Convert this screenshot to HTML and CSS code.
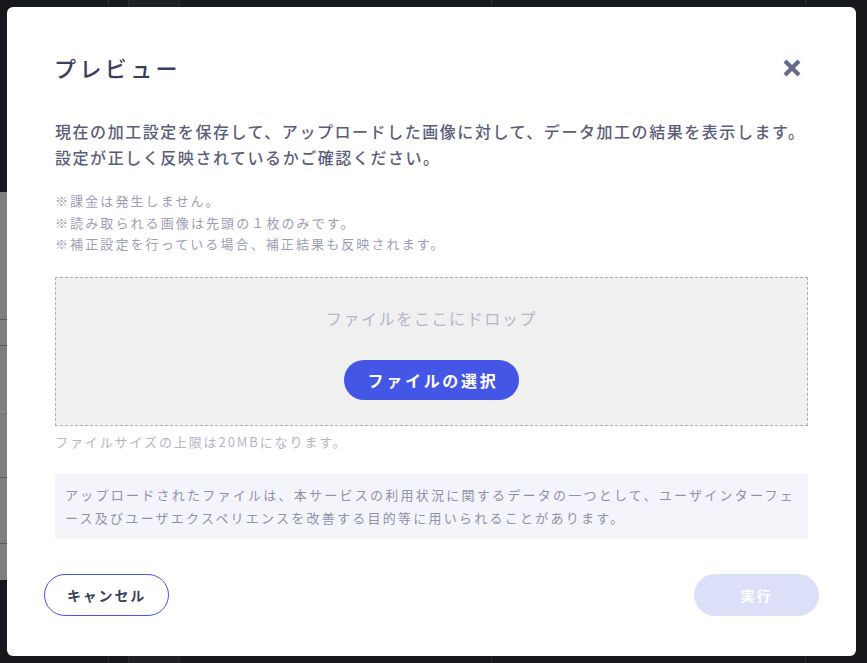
FILE: index.html
```html
<!DOCTYPE html>
<html lang="ja">

<head>
    <meta charset="UTF-8">
    <meta name="viewport" content="width=device-width, initial-scale=1.0">
    <title>プレビュー</title>
    <link rel="stylesheet" href="styles.css">
</head>

<body>
    <!-- 背景のページ（オーバーレイの下） -->
    <div class="page-behind">
        <div class="col col-side">
            <div class="side-panel">
                <div class="side-row"></div>
                <div class="side-row"></div>
                <div class="side-row light"></div>
                <div class="side-row"></div>
                <div class="side-row"></div>
            </div>
        </div>
        <div class="col col-narrow"></div>
        <div class="col col-mid"></div>
        <div class="col col-wide"></div>
        <div class="col col-wide2"></div>
        <div class="col col-rest"></div>
    </div>

    <div class="overlay">
        <div class="modal">
            <div class="modal-header">
                <h2 class="modal-title">プレビュー</h2>
                <button class="close-button" aria-label="閉じる">
                    <svg width="20" height="20" viewBox="0 0 20 20">
                        <path d="M3 3 L17 17 M17 3 L3 17" stroke="#666a8b" stroke-width="4.2" fill="none" />
                    </svg>
                </button>
            </div>

            <p class="modal-description">現在の加工設定を保存して、アップロードした画像に対して、データ加工の結果を表示します。<br>設定が正しく反映されているかご確認ください。</p>

            <ul class="modal-notes">
                <li>※課金は発生しません。</li>
                <li>※読み取られる画像は先頭の１枚のみです。</li>
                <li>※補正設定を行っている場合、補正結果も反映されます。</li>
            </ul>

            <div class="dropzone">
                <p class="dropzone-text">ファイルをここにドロップ</p>
                <button class="select-button">ファイルの選択</button>
            </div>
            <p class="size-note">ファイルサイズの上限は20MBになります。</p>

            <div class="info-box">
                アップロードされたファイルは、本サービスの利用状況に関するデータの一つとして、ユーザインターフェース及びユーザエクスペリエンスを改善する目的等に用いられることがあります。
            </div>

            <div class="modal-footer">
                <button class="cancel-button">キャンセル</button>
                <button class="run-button" disabled>実行</button>
            </div>
        </div>
    </div>
</body>

</html>
```

FILE: styles.css
```css
body {
    margin: 0;
    padding: 0;
    background-color: #17181c;
    font-family: "Noto Sans CJK JP", "Noto Sans", sans-serif;
    height: 663px;
    overflow: hidden;
}

.page-behind {
    display: flex;
    height: 663px;
}

.col {
    height: 100%;
    border-right: 1px solid #2a2b31;
}

.col-side {
    width: 108px;
}

.col-narrow {
    width: 19px;
}

.col-mid {
    width: 50px;
    background-color: #202127;
}

.col-wide {
    width: 311px;
}

.col-wide2 {
    width: 313px;
}

.col-rest {
    flex: 1;
    border-right: none;
}

.side-panel {
    margin-top: 192px;
    height: 388px;
    background-color: #7e7e7e;
    padding-top: 127px;
    box-sizing: border-box;
}

.side-row {
    height: 25px;
    border-top: 1px solid #5a5a5a;
}

.side-row.light {
    height: 65px;
    border-top-color: #8c8c8c;
}

.side-row:nth-child(2) {
    height: 65px;
}

.side-row:nth-child(4) {
    height: 65px;
}

.overlay {
    position: fixed;
    top: 0;
    left: 0;
    right: 0;
    bottom: 0;
    padding: 7px 11px 7px 7px;
    display: flex;
    align-items: center;
    justify-content: center;
}

.modal {
    width: 849px;
    height: 649px;
    box-sizing: border-box;
    background-color: #ffffff;
    border-radius: 6px;
    padding: 44px 48px 40px;
}

.modal-header {
    display: flex;
    justify-content: space-between;
    align-items: center;
    height: 33px;
}

.modal-title {
    margin: 0 0 0 -1px;
    font-size: 22px;
    line-height: 33px;
    font-weight: 500;
    letter-spacing: 3.4px;
    color: #3b3f5e;
}

.close-button {
    width: 34px;
    height: 34px;
    padding: 0;
    border: none;
    background: none;
    display: flex;
    align-items: center;
    justify-content: center;
    cursor: pointer;
    margin-right: -1px;
}

.modal-description {
    margin: 34px 0 0;
    font-size: 16px;
    line-height: 26px;
    font-weight: 500;
    letter-spacing: 1.55px;
    color: #5b5e7a;
}

.modal-notes {
    list-style: none;
    margin: 20px 0 0;
    padding: 0;
    font-size: 13px;
    line-height: 21.5px;
    letter-spacing: 2.1px;
    color: #9c9eb6;
}

.dropzone {
    margin-top: 22px;
    border: 1px dashed #aeaeb8;
    background-color: #f0f0f0;
    padding: 28px 0 25px;
    text-align: center;
}

.dropzone-text {
    margin: 0;
    font-size: 16px;
    line-height: 24px;
    letter-spacing: 1.6px;
    color: #b5b6c6;
}

.select-button {
    margin-top: 30px;
    height: 40px;
    padding: 0 21px 0 24px;
    border: none;
    border-radius: 20px;
    background-color: #4356e6;
    color: #ffffff;
    font-family: inherit;
    font-size: 16px;
    font-weight: 700;
    letter-spacing: 2.7px;
    cursor: pointer;
}

.size-note {
    margin: 6px 0 0;
    font-size: 13px;
    line-height: 20px;
    letter-spacing: 1.9px;
    color: #b3b5c6;
}

.info-box {
    margin-top: 22px;
    background-color: #f4f5fb;
    padding: 9px 8px 10px 10px;
    font-size: 13px;
    line-height: 23px;
    letter-spacing: 2.25px;
    line-break: loose;
    color: #8f92ab;
}

.modal-footer {
    margin: 35px -11px 0;
    display: flex;
    justify-content: space-between;
}

.cancel-button,
.run-button {
    width: 125px;
    height: 42px;
    border-radius: 21px;
    font-family: inherit;
    font-size: 14px;
    font-weight: 700;
    letter-spacing: 1.8px;
    cursor: pointer;
}

.cancel-button {
    background-color: #ffffff;
    border: 1px solid #4356e6;
    color: #3b3f5e;
}

.run-button {
    background-color: #dcdff8;
    border: none;
    color: #ffffff;
    letter-spacing: 2px;
    cursor: default;
}
```
